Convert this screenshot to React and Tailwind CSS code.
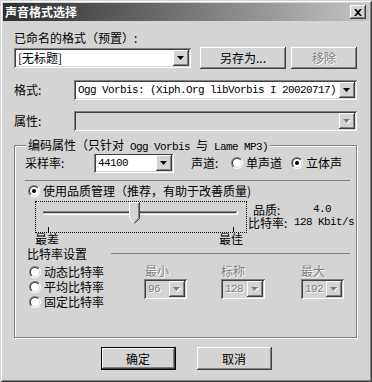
import React from "react";

const CJK = "font-['Noto_Sans_CJK_SC',sans-serif]";
const MONO = "font-['Liberation_Mono','Noto_Sans_CJK_SC',monospace] text-[11px] tracking-[-0.6px]";
const SUNKEN =
  "shadow-[inset_1px_1px_0_#808080,inset_-1px_-1px_0_#ffffff,inset_2px_2px_0_#404040,inset_-2px_-2px_0_#d4d4d4]";
const RAISED =
  "shadow-[inset_-1px_-1px_0_#404040,inset_1px_1px_0_#ffffff,inset_-2px_-2px_0_#808080,inset_2px_2px_0_#d4d4d4]";
const DISABLED = "text-[#808080] [text-shadow:1px_1px_0_#ffffff]";
const ETCHED_H = "h-[2px] border-t border-[#808080] border-b-white";

const Arrow = ({ disabled }) => (
  <div className={`flex h-[16px] w-[16px] shrink-0 items-center justify-center bg-[#d4d4d4] ${RAISED}`}>
    <svg width="8" height="5" viewBox="0 0 8 5">
      {disabled && <path d="M1 1h7L4.5 5z" fill="#ffffff" />}
      <path d="M0 0h7L3.5 4z" fill={disabled ? "#808080" : "#000000"} />
    </svg>
  </div>
);

const Combo = ({ className = "", text, disabled, mono }) => (
  <div
    className={`flex h-[20px] shrink-0 items-center p-[2px] ${SUNKEN} ${
      disabled ? "bg-[#d4d4d4]" : "bg-white"
    } ${className}`}
  >
    <div
      className={`flex-1 truncate pl-[2px] leading-[16px] ${mono ? MONO : "text-[12px]"} ${
        disabled ? DISABLED : ""
      }`}
    >
      {text}
    </div>
    <Arrow disabled={disabled} />
  </div>
);

const Button = ({ children, className = "", disabled, isDefault }) => (
  <div className={`shrink-0 ${isDefault ? "border border-black" : ""} ${className}`}>
    <div
      className={`flex h-full w-full items-center justify-center bg-[#d4d4d4] text-[12px] ${RAISED} ${
        disabled ? DISABLED : ""
      }`}
    >
      {children}
    </div>
  </div>
);

const Radio = ({ checked }) => (
  <svg width="12" height="12" viewBox="0 0 12 12" className="shrink-0">
    <defs>
      <linearGradient id="radioOuter" x1="0" y1="0" x2="1" y2="1">
        <stop offset="0.5" stopColor="#808080" />
        <stop offset="0.5" stopColor="#ffffff" />
      </linearGradient>
      <linearGradient id="radioInner" x1="0" y1="0" x2="1" y2="1">
        <stop offset="0.5" stopColor="#404040" />
        <stop offset="0.5" stopColor="#d4d4d4" />
      </linearGradient>
    </defs>
    <circle cx="6" cy="6" r="6" fill="url(#radioOuter)" />
    <circle cx="6" cy="6" r="5" fill="url(#radioInner)" />
    <circle cx="6" cy="6" r="4" fill="#ffffff" />
    {checked && <circle cx="6" cy="6" r="2" fill="#000000" />}
  </svg>
);

const RadioLabel = ({ checked, children, className = "" }) => (
  <div className={`flex items-center gap-[3px] whitespace-nowrap ${className}`}>
    <Radio checked={checked} />
    <span className="leading-[14px]">{children}</span>
  </div>
);

const Slider = () => (
  <svg width="210" height="30" viewBox="0 0 210 30" className="block">
    {/* track */}
    <rect x="7" y="9" width="195" height="4" fill="#ffffff" />
    <rect x="7" y="9" width="194" height="3" fill="#d4d4d4" />
    <rect x="7" y="9" width="194" height="1" fill="#808080" />
    <rect x="7" y="9" width="1" height="3" fill="#808080" />
    <rect x="8" y="10" width="192" height="1" fill="#404040" />
    {/* thumb */}
    <g transform="translate(93 0)">
      <path d="M0 0H10V16L5 21L0 16Z" fill="#d4d4d4" />
      <path d="M0.5 16V0.5H10" stroke="#ffffff" fill="none" />
      <path d="M10.5 0V16.5L5.5 21.5" stroke="#404040" fill="none" />
      <path d="M9.5 1V16L5 20.5" stroke="#808080" fill="none" />
      <path d="M0.5 16.5L4.5 20.5" stroke="#ffffff" fill="none" />
    </g>
    {/* ticks */}
    <rect x="12" y="25" width="1" height="5" fill="#000000" />
    <rect x="197" y="25" width="1" height="5" fill="#000000" />
  </svg>
);

const CloseButton = () => (
  <div className={`flex h-[14px] w-[16px] items-center justify-center bg-[#d4d4d4] ${RAISED}`}>
    <svg width="8" height="7" viewBox="0 0 8 7">
      <path d="M0 0h2l2 2 2-2h2L5 3.5 8 7H6L4 5 2 7H0l3-3.5z" fill="#000000" />
    </svg>
  </div>
);

export default function App() {
  return (
    <div
      className={`h-[382px] w-[372px] overflow-hidden bg-[#d4d4d4] p-[3px] text-[12px] text-black ${CJK} shadow-[inset_1px_1px_0_#d4d4d4,inset_-1px_-1px_0_#404040,inset_2px_2px_0_#ffffff,inset_-2px_-2px_0_#808080]`}
    >
      {/* title bar */}
      <div className="flex h-[18px] items-center justify-between bg-linear-to-r from-[#2e2e2e] to-[#c6c6c6] pl-[2px] pr-[3px]">
        <span className="text-[12px] font-bold leading-[14px] text-white">声音格式选择</span>
        <CloseButton />
      </div>

      <div className="px-[11px]">
        <div className="mt-[10px] h-[14px] leading-[14px]">已命名的格式（预置）:</div>

        <div className="mt-[2px] flex h-[22px] items-center">
          <Combo className="w-[177px]" text="[无标题]" />
          <Button className="ml-[9px] h-[22px] w-[86px]">另存为...</Button>
          <Button className="ml-[5px] h-[22px] w-[66px]" disabled>
            移除
          </Button>
        </div>

        <div className="mt-[11px] flex h-[20px] items-center">
          <span className="w-[60px] shrink-0">格式:</span>
          <Combo className="w-[283px]" text="Ogg Vorbis: (Xiph.Org libVorbis I 20020717)" mono />
        </div>

        <div className="mt-[11px] flex h-[20px] items-center">
          <span className="w-[60px] shrink-0">属性:</span>
          <Combo className="w-[283px]" text="" disabled />
        </div>

        {/* encoding group */}
        <div className="relative mt-[14px] h-[193px] w-[343px] border border-[#808080] shadow-[1px_1px_0_#ffffff,inset_1px_1px_0_#ffffff]">
          <span className="absolute -top-[8px] left-[11px] whitespace-pre bg-[#d4d4d4] px-[2px] leading-[14px]">
            编码属性（只针对<span className={MONO}> Ogg Vorbis </span>与<span className={MONO}> Lame MP3)</span>
          </span>

          <div className="pl-[10px] pr-[6px]">
            <div className="mt-[7px] flex h-[20px] items-center">
              <span className="w-[69px] shrink-0">采样率:</span>
              <Combo className="w-[80px]" text="44100" mono />
              <span className="ml-[17px] w-[40px] shrink-0">声道:</span>
              <RadioLabel className="w-[60px]">单声道</RadioLabel>
              <RadioLabel checked>立体声</RadioLabel>
            </div>

            <div className={`mt-[7px] ${ETCHED_H}`} />

            <RadioLabel checked className="mt-[2px] h-[14px] pl-[3px]">
              使用品质管理（推荐，有助于改善质量)
            </RadioLabel>

            <div className="mt-[3px] flex">
              <div className="ml-[10px] w-[212px] shrink-0">
                <div className="h-[32px] border border-dotted border-black">
                  <Slider />
                </div>
                <div className="flex h-[12px] justify-between pr-[4px] leading-[12px]">
                  <span>最差</span>
                  <span>最佳</span>
                </div>
              </div>
              <div className="ml-[1px] shrink-0 whitespace-nowrap pt-[2px] leading-[13px]">
                <div className="flex">
                  <span className="w-[65px] shrink-0 pl-[5px]">品质:</span>
                  <span className={MONO}>4.0</span>
                </div>
                <div className="flex">
                  <span className="w-[46px] shrink-0">比特率:</span>
                  <span className={MONO}>128 Kbit/s</span>
                </div>
              </div>
            </div>

            <div className="mt-[2px] flex h-[13px] items-center pl-[2px]">
              <span className="leading-[13px]">比特率设置</span>
              <div className={`ml-[24px] flex-1 ${ETCHED_H}`} />
            </div>

            <div className="mt-[4px] flex">
              <div className="w-[119px] shrink-0 pl-[4px]">
                <RadioLabel className="h-[15px]">动态比特率</RadioLabel>
                <RadioLabel className="h-[15px]">平均比特率</RadioLabel>
                <RadioLabel className="h-[15px]">固定比特率</RadioLabel>
              </div>
              <div className="w-[77px] shrink-0">
                <div className={`h-[13px] pl-[1px] leading-[13px] ${DISABLED}`}>最小</div>
                <Combo className="mt-[2px] h-[19px] w-[43px]" text="96" mono disabled />
              </div>
              <div className="w-[80px] shrink-0">
                <div className={`h-[13px] leading-[13px] ${DISABLED}`}>标称</div>
                <Combo className="mt-[2px] h-[19px] w-[44px]" text="128" mono disabled />
              </div>
              <div className="shrink-0">
                <div className={`h-[13px] leading-[13px] ${DISABLED}`}>最大</div>
                <Combo className="mt-[2px] h-[19px] w-[43px]" text="192" mono disabled />
              </div>
            </div>
          </div>
        </div>

        <div className="mt-[9px] flex justify-center gap-[21px]">
          <Button className="h-[23px] w-[75px]" isDefault>
            确定
          </Button>
          <Button className="h-[23px] w-[75px]">取消</Button>
        </div>
      </div>
    </div>
  );
}
